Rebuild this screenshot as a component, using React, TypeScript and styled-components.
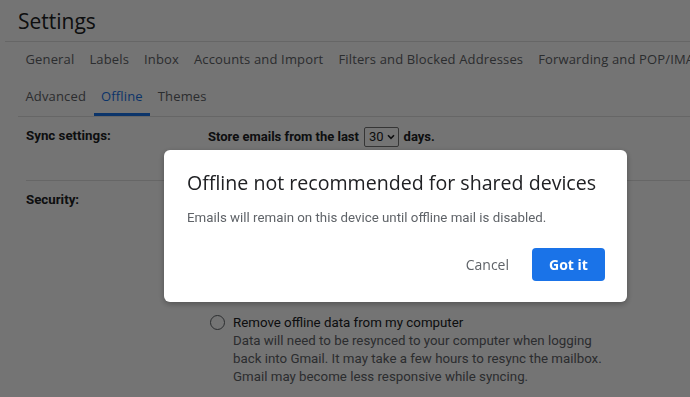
import React from 'react';
import styled, { createGlobalStyle } from 'styled-components';

const GlobalStyle = createGlobalStyle`
  html, body {
    margin: 0;
    padding: 0;
    background: #ffffff;
    overflow: hidden;
  }
  body {
    font-family: Roboto, "Liberation Sans", Arial, sans-serif;
    color: #202124;
  }
`;

const Page = styled.div`
  width: 690px;
  height: 397px;
  overflow: hidden;
  background: #ffffff;
`;

const Title = styled.h1`
  margin: 0 0 0 5px;
  padding: 7px 0 0 13px;
  height: 42px;
  box-sizing: border-box;
  font-family: "Open Sans", Roboto, sans-serif;
  font-size: 21px;
  font-weight: 400;
  color: #202124;
  border-bottom: 1px solid #e0e0e0;
`;

const TabRow = styled.div<{ $h: number }>`
  display: flex;
  align-items: stretch;
  height: ${(p) => p.$h}px;
  padding-left: 18px;
  white-space: nowrap;
`;

const Tab = styled.div<{ $active?: boolean }>`
  display: flex;
  align-items: center;
  padding: 0 7.5px;
  font-family: "Open Sans", Roboto, sans-serif;
  font-size: 13px;
  letter-spacing: 0.15px;
  color: ${(p) => (p.$active ? '#1a73e8' : '#5f6368')};
  border-bottom: 3px solid ${(p) => (p.$active ? '#1a73e8' : 'transparent')};
`;

const TabDivider = styled.div`
  height: 1px;
  background: #e0e0e0;
  margin-left: 18px;
`;

const SettingRow = styled.div<{ $divider?: boolean }>`
  display: grid;
  grid-template-columns: 182px 1fr;
  padding: ${(p) => (p.$divider ? '10px 0 33px' : '10px 0 0')};
  margin-left: 26px;
  border-bottom: ${(p) => (p.$divider ? '1px solid #e0e0e0' : 'none')};
  font-size: 13.3px;
  line-height: 18px;
`;

const Label = styled.div`
  font-weight: 700;
  color: #202124;
`;

const Value = styled.div`
  color: #202124;
`;

const BoldLine = styled.div`
  font-weight: 700;
  font-size: 13px;
  display: flex;
  align-items: center;
  gap: 4px;
`;

const SelectBox = styled.span`
  display: inline-flex;
  align-items: center;
  gap: 3px;
  height: 18px;
  padding: 0 3px 0 4px;
  border: 1px solid #767676;
  border-radius: 2px;
  font-weight: 400;
  font-size: 13px;
  margin: 0 1px;
`;

const SubHeading = styled.div`
  color: #202124;
  margin-bottom: 12px;
`;

const Option = styled.div<{ $gap?: number }>`
  display: flex;
  gap: 8px;
  margin-top: ${(p) => p.$gap ?? 0}px;
`;

const Radio = styled.span`
  flex: none;
  width: 15px;
  height: 15px;
  margin-top: 1px;
  margin-left: 2px;
  border: 1.5px solid #5f6368;
  border-radius: 50%;
  box-sizing: border-box;
`;

const OptionText = styled.div`
  color: #202124;
`;

const Hint = styled.div`
  color: #5f6368;
  width: 375px;
`;

const Scrim = styled.div`
  position: fixed;
  inset: 0;
  background: rgba(0, 0, 0, 0.545);
`;

const Dialog = styled.div`
  position: fixed;
  left: 164px;
  top: 150px;
  width: 463px;
  height: 152px;
  box-sizing: border-box;
  padding: 19px 22px 0 23px;
  background: #ffffff;
  border-radius: 6px;
  box-shadow: 0 2px 6px rgba(0, 0, 0, 0.3);
`;

const DialogTitle = styled.h2`
  margin: 0;
  font-family: "Open Sans", Roboto, sans-serif;
  font-size: 19.6px;
  font-weight: 400;
  line-height: 28px;
  color: #202124;
`;

const DialogText = styled.p`
  margin: 12px 0 0;
  font-size: 13.3px;
  line-height: 18px;
  color: #5f6368;
`;

const Actions = styled.div`
  display: flex;
  justify-content: flex-end;
  align-items: center;
  gap: 12px;
  margin-top: 21px;
`;

const Button = styled.button<{ $primary?: boolean }>`
  height: 33px;
  padding: 0 ${(p) => (p.$primary ? '0' : '11px')};
  width: ${(p) => (p.$primary ? '73px' : 'auto')};
  border: none;
  border-radius: 4px;
  font-family: "Open Sans", Roboto, sans-serif;
  font-size: 14px;
  font-weight: ${(p) => (p.$primary ? 700 : 500)};
  color: ${(p) => (p.$primary ? '#ffffff' : '#5f6368')};
  background: ${(p) => (p.$primary ? '#1a73e8' : 'transparent')};
  cursor: pointer;
`;

const tabsTop = ['General', 'Labels', 'Inbox', 'Accounts and Import', 'Filters and Blocked Addresses', 'Forwarding and POP/IMAP', 'Add-ons'];
const tabsBottom = ['Advanced', 'Offline', 'Themes'];

export default function App() {
  return (
    <>
      <GlobalStyle />
      <Page>
        <Title>Settings</Title>
        <TabRow $h={36}>
          {tabsTop.map((t) => (
            <Tab key={t}>{t}</Tab>
          ))}
        </TabRow>
        <TabRow $h={38}>
          {tabsBottom.map((t) => (
            <Tab key={t} $active={t === 'Offline'}>
              {t}
            </Tab>
          ))}
        </TabRow>
        <TabDivider />
        <SettingRow $divider>
          <Label>Sync settings:</Label>
          <Value>
            <BoldLine>
              Store emails from the last
              <SelectBox>
                30
                <svg width="8" height="6" viewBox="0 0 8 6">
                  <path d="M1 1.2 L4 4.4 L7 1.2" fill="none" stroke="#202124" strokeWidth="1.6" />
                </svg>
              </SelectBox>
              days.
            </BoldLine>
          </Value>
        </SettingRow>
        <SettingRow>
          <Label>Security:</Label>
          <Value>
            <SubHeading>When I log out of my Google Account</SubHeading>
            <Option>
              <Radio />
              <div>
                <OptionText>Keep offline data on my computer</OptionText>
                <Hint>
                  Offline data stored on this computer will be kept and remain available the next
                  time you log in. Anyone using this computer may be able to read your emails while
                  offline.
                </Hint>
              </div>
            </Option>
            <Option $gap={21}>
              <Radio />
              <div>
                <OptionText>Remove offline data from my computer</OptionText>
                <Hint>
                  Data will need to be resynced to your computer when logging back into Gmail. It
                  may take a few hours to resync the mailbox. Gmail may become less responsive while
                  syncing.
                </Hint>
              </div>
            </Option>
          </Value>
        </SettingRow>
      </Page>
      <Scrim />
      <Dialog role="dialog">
        <DialogTitle>Offline not recommended for shared devices</DialogTitle>
        <DialogText>Emails will remain on this device until offline mail is disabled.</DialogText>
        <Actions>
          <Button>Cancel</Button>
          <Button $primary>Got it</Button>
        </Actions>
      </Dialog>
    </>
  );
}
